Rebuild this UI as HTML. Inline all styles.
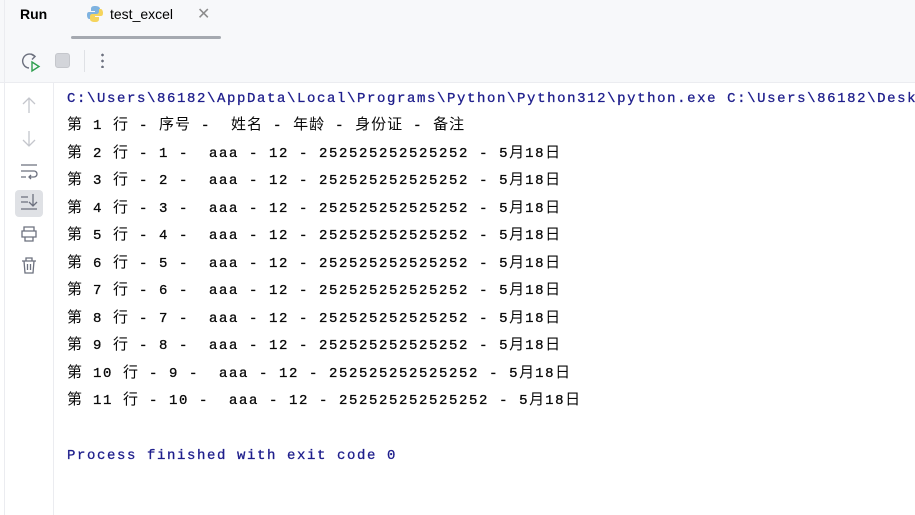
<!DOCTYPE html>
<html><head><meta charset="utf-8"><style>
*{margin:0;padding:0;box-sizing:border-box}
body{width:915px;height:515px;overflow:hidden;background:#fff;position:relative;font-family:"Liberation Sans","Noto Sans CJK SC",sans-serif}
.top{position:absolute;left:0;top:0;width:915px;height:83px;background:#f7f8fa;border-bottom:1px solid #ebecf0}
.run{position:absolute;left:20px;top:6px;font-size:14px;font-weight:bold;color:#000}
.tab{position:absolute;left:110px;top:6px;font-size:14px;color:#000}
.x{position:absolute;left:197px;top:4px;font-size:16px;color:#8c8c8c}
.ul{position:absolute;left:71px;top:36px;width:150px;height:3px;background:#a5a9b0;border-radius:2px}
.sep{position:absolute;left:84px;top:50px;width:1px;height:22px;background:#dfe1e5}
.gut{position:absolute;left:0;top:83px;width:54px;height:432px;border-right:1px solid #ebecf0;background:#fff}
.lb{position:absolute;left:4px;top:0;width:1px;height:515px;background:#ebecf0}
.hl{position:absolute;left:15px;top:107px;width:28px;height:27px;background:#dfe1e5;border-radius:4px}
pre{position:absolute;left:67px;top:86px;font-family:"Liberation Mono","Noto Sans CJK SC",monospace;font-size:14px;letter-spacing:1.6px;line-height:27.47px;color:#080808;white-space:pre;-webkit-text-stroke:0.3px}
pre i{font-style:normal;display:inline-block;width:16px;letter-spacing:0;line-height:14px;vertical-align:baseline;font-family:"Noto Sans CJK SC",sans-serif;font-size:15px;text-align:left;-webkit-text-stroke:0}
.b{color:#1e1e8c}
svg{position:absolute}
</style></head><body>
<div class="top">
<div class="run">Run</div>
<svg style="left:86px;top:5px" width="18" height="18" viewBox="0 0 18 18"><path d="M9 1c-3 0-4 1-4 3v2h4v1H3c-2 0-2 2-2 3.5S2 14 3 14h2v-2c0-2 1-3 3-3h4c1 0 2-1 2-2V4c0-2-2-3-5-3z" fill="#7fb3e0"/><path d="M9 17c3 0 4-1 4-3v-2H9v-1h6c2 0 2-2 2-3.5S16 4 15 4h-2v2c0 2-1 3-3 3H6c-1 0-2 1-2 2v3c0 2 2 3 5 3z" fill="#f5d45c"/></svg>
<div class="tab">test_excel</div>
<div class="x">✕</div>
<div class="ul"></div>
<svg style="left:20px;top:51px" width="22" height="22" viewBox="0 0 22 22"><path d="M15 5.5A7 7 0 1 0 9 17" fill="none" stroke="#6c707e" stroke-width="1.4"/><path d="M11 3l4 2.5-3 3" fill="none" stroke="#6c707e" stroke-width="1.4"/><path d="M12 11l7 4.5-7 4.5z" fill="none" stroke="#2e9e4e" stroke-width="1.4"/></svg>
<div style="position:absolute;left:55px;top:53px;width:15px;height:15px;background:#d3d5da;border-radius:3px;border:1px solid #c5c7cc"></div>
<div class="sep"></div>
<div style="position:absolute;left:101px;top:52px;width:3px;height:16px;background:radial-gradient(circle,#6c707e 1.2px,transparent 1.5px) 0 0/3px 6px"></div>
</div>
<div class="gut"><div class="hl"></div></div>
<div class="lb"></div>
<svg style="left:19px;top:95px" width="20" height="190" viewBox="0 0 20 190" fill="none" stroke-width="1.3">
<path d="M10 3v15M4 9l6-6 6 6" stroke="#c4c6cc"/>
<path d="M10 36v15M4 45l6 6 6-6" stroke="#c4c6cc"/>
<g stroke="#6c707e"><path d="M2 70h16M2 76h13a3 3 0 0 1 0 6H10M12 80l-2 2 2 2M2 82h5"/>
<path d="M2 102h7M2 107h7M2 114h16M14 99v12M10 107l4 4 4-4"/>
<path d="M5 136v-4h10v4M3 136h14v6H3zM6 142v4h8v-4"/>
<path d="M3 166h14M7 166v-3h6v3M5 166l1 12h8l1-12M8.5 169v6M11.5 169v6"/></g>
</svg>
<pre><span class="b">C:\Users\86182\AppData\Local\Programs\Python\Python312\python.exe C:\Users\86182\Desk</span>
<i>第</i> 1 <i>行</i> - <i>序</i><i>号</i> -  <i>姓</i><i>名</i> - <i>年</i><i>龄</i> - <i>身</i><i>份</i><i>证</i> - <i>备</i><i>注</i>
<i>第</i> 2 <i>行</i> - 1 -  aaa - 12 - 252525252525252 - 5<i>月</i>18<i>日</i>
<i>第</i> 3 <i>行</i> - 2 -  aaa - 12 - 252525252525252 - 5<i>月</i>18<i>日</i>
<i>第</i> 4 <i>行</i> - 3 -  aaa - 12 - 252525252525252 - 5<i>月</i>18<i>日</i>
<i>第</i> 5 <i>行</i> - 4 -  aaa - 12 - 252525252525252 - 5<i>月</i>18<i>日</i>
<i>第</i> 6 <i>行</i> - 5 -  aaa - 12 - 252525252525252 - 5<i>月</i>18<i>日</i>
<i>第</i> 7 <i>行</i> - 6 -  aaa - 12 - 252525252525252 - 5<i>月</i>18<i>日</i>
<i>第</i> 8 <i>行</i> - 7 -  aaa - 12 - 252525252525252 - 5<i>月</i>18<i>日</i>
<i>第</i> 9 <i>行</i> - 8 -  aaa - 12 - 252525252525252 - 5<i>月</i>18<i>日</i>
<i>第</i> 10 <i>行</i> - 9 -  aaa - 12 - 252525252525252 - 5<i>月</i>18<i>日</i>
<i>第</i> 11 <i>行</i> - 10 -  aaa - 12 - 252525252525252 - 5<i>月</i>18<i>日</i>

<span class="b">Process finished with exit code 0</span></pre>
</body></html>
